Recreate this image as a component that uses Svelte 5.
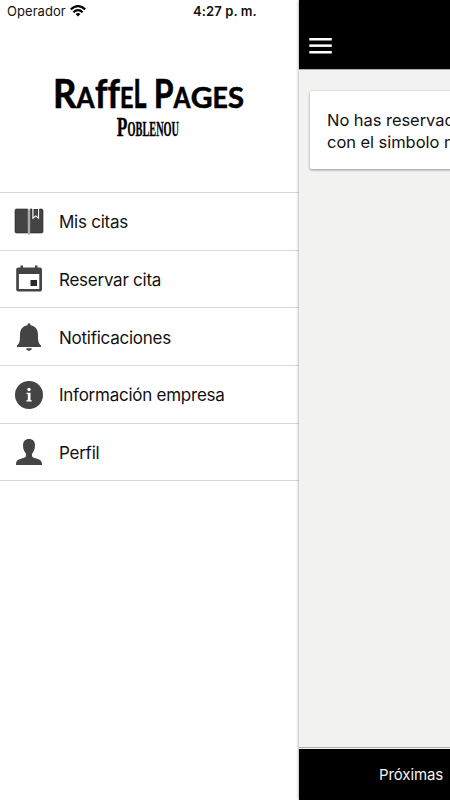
<script lang="ts">
  type Glyph = { ch: string; x: number; w: number; size: number };

  const items = [
    { icon: 'book', label: 'Mis citas' },
    { icon: 'calendar', label: 'Reservar cita' },
    { icon: 'bell', label: 'Notificaciones' },
    { icon: 'info', label: 'Información empresa' },
    { icon: 'person', label: 'Perfil' }
  ];

  const brand: Glyph[] = [
    { ch: 'R', x: 53, w: 23.5, size: 41 },
    { ch: 'A', x: 76.6, w: 18, size: 28 },
    { ch: 'f', x: 95, w: 12.4, size: 39.5 },
    { ch: 'f', x: 107.5, w: 12.4, size: 39.5 },
    { ch: 'E', x: 120, w: 13.5, size: 28 },
    { ch: 'L', x: 133.6, w: 13, size: 41 },
    { ch: 'P', x: 153.7, w: 19.8, size: 41 },
    { ch: 'A', x: 173.6, w: 17, size: 28 },
    { ch: 'G', x: 190.7, w: 21.8, size: 28 },
    { ch: 'E', x: 212.6, w: 15.3, size: 28 },
    { ch: 'S', x: 228, w: 16, size: 28 }
  ];
</script>

<div class="screen">
  <aside class="drawer">
    <div class="status">
      <span class="carrier">Operador</span>
      <svg class="wifi" width="16" height="12" viewBox="0 0 16 12" fill="none" stroke="#000" stroke-width="2.2">
        <path d="M.8 4.4Q8-2.2 15.2 4.4" />
        <path d="M3.4 7.2Q8 3 12.6 7.2" />
        <path d="M5.6 9 8 11.6 10.4 9Q8 7 5.6 9Z" fill="#000" stroke="none" />
      </svg>
      <span class="time">4:27 p. m.</span>
    </div>

    <svg class="logo" width="298" height="168" viewBox="0 24 298 168">
      {#each brand as g}
        <text class="brand" x={g.x} y="108" font-size={g.size} textLength={g.w} lengthAdjust="spacingAndGlyphs">{g.ch}</text>
      {/each}
      <text class="place" x="116.8" y="136" font-size="27" textLength="10.6" lengthAdjust="spacingAndGlyphs">P</text>
      <text class="place" x="127.6" y="136" font-size="21" textLength="51.4" lengthAdjust="spacingAndGlyphs">OBLENOU</text>
    </svg>

    <nav class="menu">
      {#each items as item}
        <button class="item">
          <svg class="icon" width="30" height="32" viewBox="0 0 30 32" fill="#444">
            {#if item.icon === 'book'}
              <path d="M2.5 3H13.6V27H2.5Q1 27 1 25.5V4.5Q1 3 2.5 3Z" stroke="#222" stroke-width=".6" />
              <path d="M16.2 3H18V14L21.8 11 25.5 14V3H27.5Q29 3 29 4.5V25.5Q29 27 27.5 27H16.2Z" stroke="#222" stroke-width=".6" />
              <path d="M19.5 3H24V11L21.8 9.2 19.5 11Z" />
              <path d="M13.9 3.5h2.2V28l-1.1 1.3-1.1-1.3Z" fill="#aaa" />
            {:else if item.icon === 'calendar'}
              <path fill-rule="evenodd" d="M6.5 2.5H9V4.5H21V2.5H23.5V4.5H26Q28 4.5 28 6.5V26.5Q28 28.5 26 28.5H4.2Q2.2 28.5 2.2 26.5V6.5Q2.2 4.5 4.2 4.5H6.5ZM4.9 11V26H25.3V11Z" />
              <rect x="16.5" y="17" width="6.5" height="6" fill="#292929" />
            {:else if item.icon === 'bell'}
              <path d="M15 2.2Q16.5 2.2 16.6 4.2C22 5 24 9 24 14C24 20 24.5 22.5 27 24.5V26H3V24.5C5.5 22.5 6 20 6 14C6 9 8 5 13.4 4.2Q13.5 2.2 15 2.2Z" />
              <path d="M12 27.3H18Q17.5 30 15 30T12 27.3Z" />
            {:else if item.icon === 'info'}
              <circle cx="15" cy="16" r="14" />
              <circle cx="15" cy="10.5" r="1.7" fill="#fff" />
              <path d="M12.5 13.8H16.5V21.2H17.8V22.4H12.3V21.2H13.8V15H12.5Z" fill="#fff" />
            {:else}
              <path d="M15 3C19 3 21 5.5 21 9.5C21 13.5 19.5 15.5 18.2 17.5C17.6 20 18 21 20 21.8C24.5 23.3 28 23.7 28 28.5V29H2V28.5C2 23.7 5.5 23.3 10 21.8C12 21 12.4 20 11.8 17.5C10.5 15.5 9 13.5 9 9.5C9 5.5 11 3 15 3Z" />
            {/if}
          </svg>
          <span>{item.label}</span>
        </button>
      {/each}
    </nav>
  </aside>

  <main class="page">
    <header class="topbar">
      <button class="burger" aria-label="Menú">
        <svg width="23" height="16" viewBox="0 0 23 16" fill="#fff">
          <rect x=".3" y="0" width="22.5" height="2.5" />
          <rect x=".3" y="6.4" width="22.5" height="2.5" />
          <rect x=".3" y="13" width="22.5" height="2.5" />
        </svg>
      </button>
    </header>
    <div class="content">
      <div class="card">
        <p>No has reservado</p>
        <p>con el simbolo más</p>
      </div>
    </div>
    <footer class="tabs">Próximas</footer>
  </main>
</div>

<style>
  .screen {
    display: flex;
    width: 450px;
    height: 800px;
    overflow: hidden;
    background: #fff;
    color: #111;
    font-family: Inter, "Liberation Sans", sans-serif;
  }

  button {
    margin: 0;
    padding: 0;
    border: 0;
    background: none;
    color: inherit;
    font: inherit;
    text-align: left;
  }

  .drawer {
    flex: 0 0 299px;
    display: flex;
    flex-direction: column;
  }

  .status {
    display: flex;
    align-items: center;
    height: 24px;
    padding: 0 0 2px 7px;
    box-sizing: border-box;
    font-size: 13px;
    line-height: 22px;
  }

  .carrier {
    width: 59px;
    letter-spacing: 0.05px;
  }

  .wifi {
    margin-left: 4px;
  }

  .time {
    margin-left: 107px;
    font-weight: 600;
    letter-spacing: 0.1px;
    white-space: nowrap;
  }

  .logo {
    display: block;
    flex: none;
  }

  .brand {
    font-family: Lato, sans-serif;
    font-weight: 700;
    fill: #000;
    stroke: #000;
    stroke-width: 0.6;
  }

  .place {
    font-family: "Liberation Serif", serif;
    font-weight: 700;
    fill: #000;
    stroke: #000;
    stroke-width: 0.4;
  }

  .menu {
    border-top: 1px solid #d8d8d8;
  }

  .item {
    display: flex;
    align-items: center;
    gap: 15px;
    width: 100%;
    height: 57.65px;
    padding: 1px 0 0 14px;
    box-sizing: border-box;
    border-bottom: 1px solid #d8d8d8;
    font-size: 17px;
    letter-spacing: -0.25px;
  }

  .item span {
    padding-top: 1px;
  }

  .icon {
    flex: none;
  }

  .page {
    flex: 0 0 151px;
    display: flex;
    flex-direction: column;
    background: #f2f2f1;
    box-shadow: 0 0 3px rgba(0, 0, 0, 0.45);
  }

  .topbar {
    height: 70px;
    padding: 38px 0 0 10px;
    box-sizing: border-box;
    background: #000;
    border-bottom: 1px solid #aaa;
  }

  .burger {
    display: block;
  }

  .burger svg {
    display: block;
  }

  .content {
    flex: 1;
    padding: 21px 0 0 11px;
    overflow: hidden;
  }

  .card {
    width: 200px;
    height: 78px;
    padding: 18px 17px;
    box-sizing: border-box;
    border-radius: 2px;
    background: #fff;
    box-shadow: 0 1px 3px rgba(0, 0, 0, 0.4);
    font-size: 16.5px;
    line-height: 22px;
    letter-spacing: -0.05px;
    white-space: nowrap;
  }

  .card p {
    margin: 0;
  }

  .tabs {
    height: 53px;
    padding-left: 80px;
    box-sizing: border-box;
    border-top: 1px solid #b2b2b2;
    box-shadow: inset 0 1px #f2f2f1;
    background: #000;
    color: #f5f5f5;
    font-size: 15px;
    line-height: 54px;
    letter-spacing: -0.1px;
  }
</style>
